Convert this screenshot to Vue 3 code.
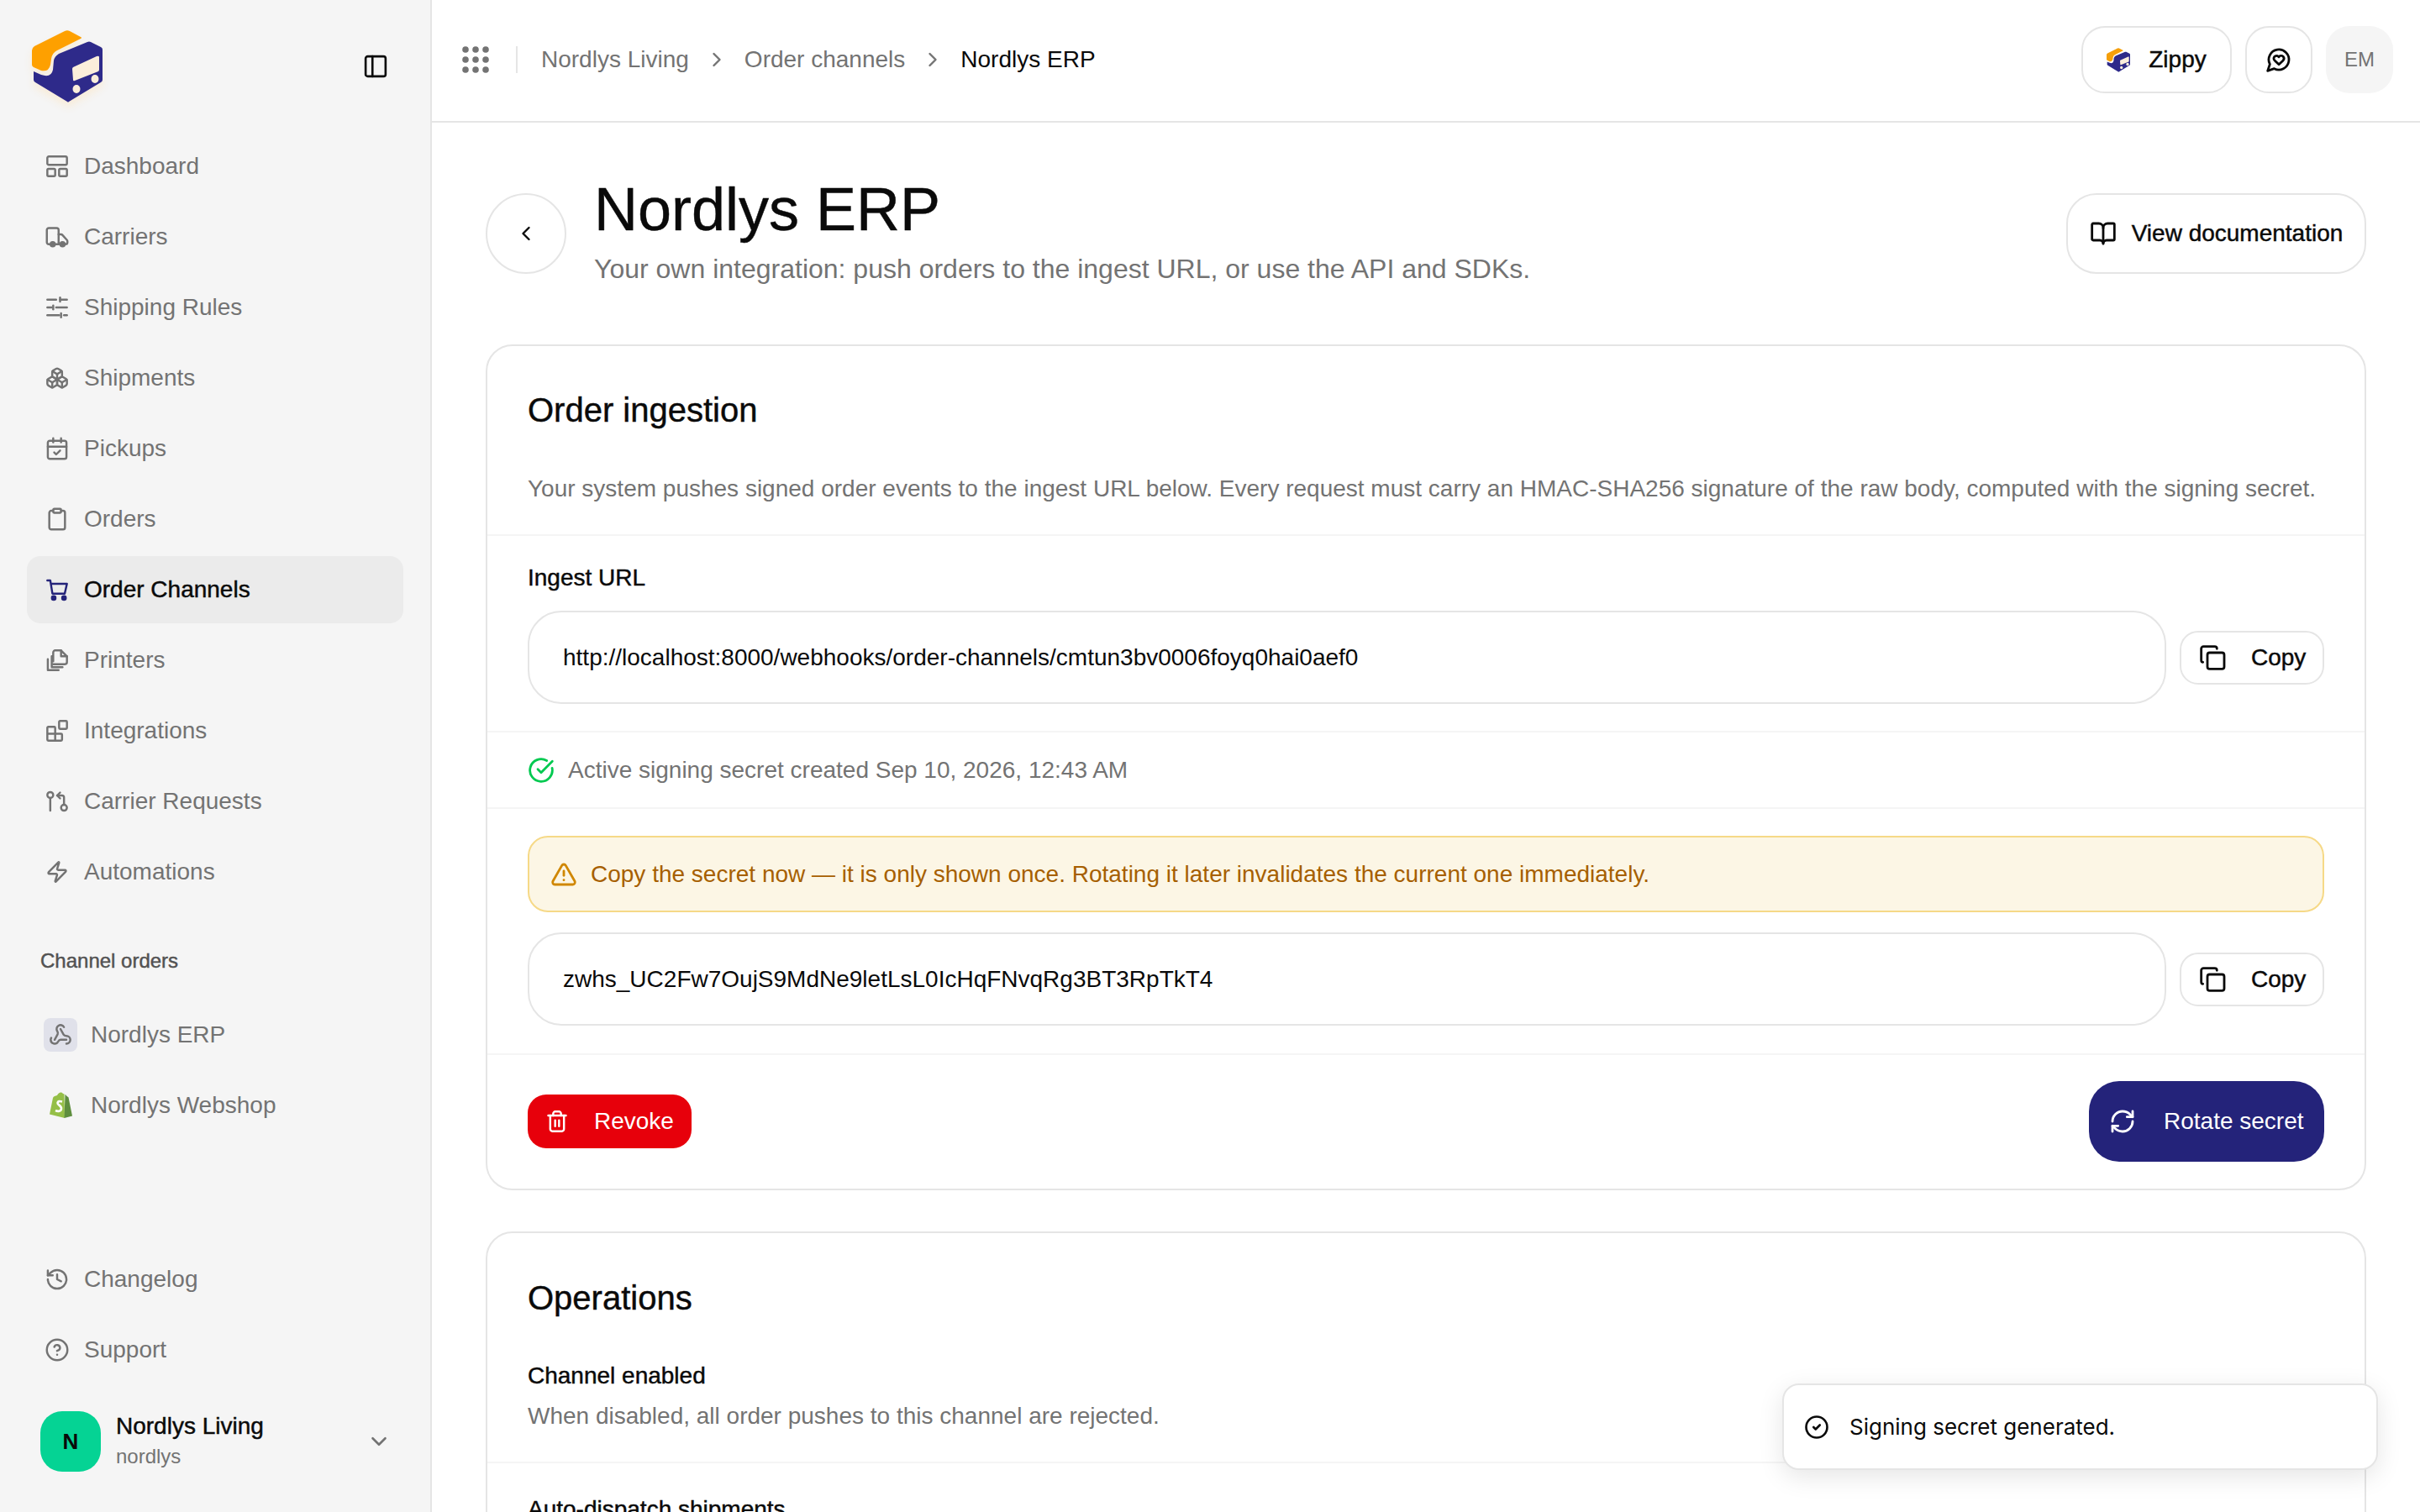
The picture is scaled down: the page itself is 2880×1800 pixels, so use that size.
<template>
  <div class="app">
    <!-- sidebar -->
    <aside class="sidebar">
      <div class="brand">
        <svg class="logo logo-big" viewBox="38 37 84 86">
          <path d="M38 61q0-3 3-5l36-18q3-1.500 6 0l13 7q2 1 0 2l-28 14q-6 3-7 10l-1 7q-2 9-11 7l-9-4q-2-1-2-3z" fill="#fea000" />
          <path d="M104 51q2-1 4 0l12 6q2 1 2 3v36q0 2-2 3l-38 23q-1 1-2 0l-38-23q-2-1-2-3V86l9 4q12 4 14-6l1-11q1-5 6-8z" fill="#2e2a8a" />
          <path d="M86 83q0-1 1-2l28-13q3-1 3 1v15q0 1-1 2l-28 11q-2 1-2-1z" fill="#fbeedb" />
          <ellipse cx="91" cy="107" rx="4.500" ry="5" fill="#fbeedb" />
          <ellipse cx="113" cy="95" rx="4.500" ry="5" fill="#fbeedb" />
        </svg>
        <svg class="ico toggle" viewBox="0 0 24 24" v-html="icons.panel"></svg>
      </div>

      <nav class="nav">
        <a v-for="item in navItems" :key="item.label" class="nav-item" :class="{ active: item.active }">
          <svg class="ico" viewBox="0 0 24 24" v-html="icons[item.icon]"></svg>
          <span>{{ item.label }}</span>
        </a>
      </nav>

      <div class="section-label medium">Channel orders</div>
      <nav class="nav">
        <a class="nav-item channel">
          <span class="channel-ico">
            <svg class="ico" viewBox="0 0 24 24" v-html="icons.webhook"></svg>
          </span>
          <span>Nordlys ERP</span>
        </a>
        <a class="nav-item channel">
          <span class="channel-ico plain">
            <svg class="shopify" viewBox="0 0 28 32">
              <path d="M1 26.500 5 7q.5-1.500 2-2l3-1q2-4 5-3.500 1 .2 2 1.500l1.500.5L19 31z" fill="#95bf47" />
              <path d="M19.500 3q1 0 1.500 1.500l2 1.500q.5.200.6.800L28 28.500 18.500 31z" fill="#5e8e3e" />
              <path d="M16 11.500q-5-1.500-5.500 1.500c-.3 2.500 5 3 4.500 7-.4 3-4 3.500-7 2" fill="none" stroke="#fff" stroke-width="2.600" />
            </svg>
          </span>
          <span>Nordlys Webshop</span>
        </a>
      </nav>

      <div class="sidebar-bottom">
        <nav class="nav">
          <a class="nav-item">
            <svg class="ico" viewBox="0 0 24 24" v-html="icons.history"></svg>
            <span>Changelog</span>
          </a>
          <a class="nav-item">
            <svg class="ico" viewBox="0 0 24 24" v-html="icons.help"></svg>
            <span>Support</span>
          </a>
        </nav>
        <div class="account">
          <div class="avatar">N</div>
          <div class="account-text">
            <div class="account-name medium">Nordlys Living</div>
            <div class="account-slug">nordlys</div>
          </div>
          <svg class="ico account-chevron" viewBox="0 0 24 24"><path d="m6 9 6 6 6-6" /></svg>
        </div>
      </div>
    </aside>

    <!-- main column -->
    <div class="main">
      <header class="topbar">
        <svg class="dots" viewBox="0 0 32 32">
          <template v-for="y in [4, 16, 28]" :key="y">
            <circle v-for="x in [4, 16, 28]" :key="x" :cx="x" :cy="y" r="3.800" />
          </template>
        </svg>
        <span class="top-divider"></span>
        <span class="crumb">Nordlys Living</span>
        <svg class="ico crumb-sep" viewBox="0 0 24 24"><path d="m9 6 6 6-6 6" /></svg>
        <span class="crumb crumb-b">Order channels</span>
        <svg class="ico crumb-sep" viewBox="0 0 24 24"><path d="m9 6 6 6-6 6" /></svg>
        <span class="crumb current">Nordlys ERP</span>

        <div class="top-actions">
          <button class="top-btn zippy">
            <svg class="logo logo-small" viewBox="38 37 84 86">
              <path d="M38 61q0-3 3-5l36-18q3-1.500 6 0l13 7q2 1 0 2l-28 14q-6 3-7 10l-1 7q-2 9-11 7l-9-4q-2-1-2-3z" fill="#f59f0a" />
              <path d="M104 51q2-1 4 0l12 6q2 1 2 3v36q0 2-2 3l-38 23q-1 1-2 0l-38-23q-2-1-2-3V86l9 4q12 4 14-6l1-11q1-5 6-8z" fill="#2e2a8a" />
              <path d="M86 83q0-1 1-2l28-13q3-1 3 1v15q0 1-1 2l-28 11q-2 1-2-1z" fill="#fbeedb" />
              <ellipse cx="91" cy="107" rx="5" ry="5.500" fill="#fbeedb" />
              <ellipse cx="113" cy="95" rx="5" ry="5.500" fill="#fbeedb" />
            </svg>
            <span class="medium">Zippy</span>
          </button>
          <button class="top-btn chat">
            <svg class="ico chat-ico" viewBox="0 0 24 24" v-html="icons.heart"></svg>
          </button>
          <div class="me">EM</div>
        </div>
      </header>

      <main class="content">
        <div class="title-row">
          <button class="back">
            <svg class="ico" viewBox="0 0 24 24"><path d="m15 6-6 6 6 6" /></svg>
          </button>
          <div class="title-text">
            <h1 class="medium">Nordlys ERP</h1>
            <p>Your own integration: push orders to the ingest URL, or use the API and SDKs.</p>
          </div>
          <button class="docs">
            <svg class="ico" viewBox="0 0 24 24" v-html="icons.book"></svg>
            <span class="medium">View documentation</span>
          </button>
        </div>

        <section class="card">
          <div class="card-head">
            <h2 class="medium">Order ingestion</h2>
            <p class="desc">Your system pushes signed order events to the ingest URL below. Every request must carry an HMAC-SHA256 signature of the raw body, computed with the signing secret.</p>
          </div>

          <div class="block url-block">
            <label class="field-label medium">Ingest URL</label>
            <div class="field-row">
              <div class="field">http://localhost:8000/webhooks/order-channels/cmtun3bv0006foyq0hai0aef0</div>
              <button class="copy">
                <svg class="ico" viewBox="0 0 24 24" v-html="icons.copy"></svg>
                <span class="medium">Copy</span>
              </button>
            </div>
          </div>

          <div class="status">
            <svg class="ico green" viewBox="0 0 24 24" v-html="icons.checkBig"></svg>
            <span>Active signing secret created Sep 10, 2026, 12:43 AM</span>
          </div>

          <div class="block secret-block">
            <div class="warning">
              <svg class="ico amber" viewBox="0 0 24 24" v-html="icons.warn"></svg>
              <span>Copy the secret now — it is only shown once. Rotating it later invalidates the current one immediately.</span>
            </div>
            <div class="field-row">
              <div class="field">zwhs_UC2Fw7OujS9MdNe9letLsL0IcHqFNvqRg3BT3RpTkT4</div>
              <button class="copy">
                <svg class="ico" viewBox="0 0 24 24" v-html="icons.copy"></svg>
                <span class="medium">Copy</span>
              </button>
            </div>
          </div>

          <div class="card-foot">
            <button class="revoke">
              <svg class="ico" viewBox="0 0 24 24" v-html="icons.trash"></svg>
              <span>Revoke</span>
            </button>
            <button class="rotate">
              <svg class="ico" viewBox="0 0 24 24" v-html="icons.refresh"></svg>
              <span>Rotate secret</span>
            </button>
          </div>
        </section>

        <section class="card ops">
          <h2 class="medium">Operations</h2>
          <div class="op-name medium first">Channel enabled</div>
          <p class="desc op-desc">When disabled, all order pushes to this channel are rejected.</p>
          <div class="op-sep"></div>
          <div class="op-name medium next">Auto-dispatch shipments</div>
        </section>
      </main>
    </div>

    <!-- toast -->
    <div class="toast">
      <svg class="ico" viewBox="0 0 24 24" v-html="icons.checkCircle"></svg>
      <span>Signing secret generated.</span>
    </div>
  </div>
</template>

<script setup>
const p = (...ds) => ds.map((d) => `<path d="${d}"/>`).join('')

const icons = {
  panel: '<rect x="2.500" y="2.500" width="19" height="19" rx="2"/><path d="M9 2.500v19"/>',
  dashboard: '<rect x="2" y="2" width="20" height="8.500" rx="1.500"/><rect x="2" y="14.500" width="8" height="7.500" rx="1.200"/><rect x="14" y="14.500" width="8" height="7.500" rx="1.200"/>',
  truck: p('M6 19.500H3.500a2 2 0 0 1-2-2V5a2 2 0 0 1 2-2h8a2 2 0 0 1 2 2v14.500', 'M13.500 9.500h2.500a2 2 0 0 1 1.500.7l4.500 5a2 2 0 0 1 .5 1.300v1a2 2 0 0 1-2 2h-1', 'M9 19.500h5') +
    '<circle cx="7.500" cy="19.500" r="2.200" fill="currentColor"/><circle cx="17.500" cy="19.500" r="2.200" fill="currentColor"/>',
  sliders: p('M22 4h-7', 'M11 4H2', 'M15 2v4', 'M22 12H11', 'M6.500 12H2', 'M8 10v4', 'M22 20h-3', 'M14 20H2', 'M16 18v4'),
  boxes: p('M2.970 12.920A2 2 0 0 0 2 14.630v3.240a2 2 0 0 0 .97 1.710l3 1.800a2 2 0 0 0 2.060 0L12 19v-5.500l-5-3-4.030 2.420Z', 'm7 16.500-4.740-2.850', 'm7 16.500 5-3', 'M7 16.500v5.170', 'M12 13.500V19l3.970 2.380a2 2 0 0 0 2.060 0l3-1.800a2 2 0 0 0 .97-1.710v-3.240a2 2 0 0 0-.97-1.710L17 10.500l-5 3Z', 'm17 16.500-5-3', 'm17 16.500 4.740-2.850', 'M17 16.500v5.170', 'M7.970 4.420A2 2 0 0 0 7 6.130v4.370l5 3 5-3V6.130a2 2 0 0 0-.97-1.710l-3-1.800a2 2 0 0 0-2.060 0l-3 1.800Z', 'M12 8 7.260 5.150', 'm12 8 4.740-2.850', 'M12 13.500V8'),
  calendar: '<rect x="2.500" y="4" width="19" height="18.500" rx="2"/>' + p('M8 1.500v4', 'M16 1.500v4', 'M2.500 10h19', 'm9 16 2 2 4-4'),
  clipboard: '<rect x="8" y="1.500" width="8" height="4" rx="1"/>' + p('M16 3.500h2a2 2 0 0 1 2 2v15a2 2 0 0 1-2 2H6a2 2 0 0 1-2-2v-15a2 2 0 0 1 2-2h2'),
  cart: p('M2 2.500h3l2.200 13.500h12.500L22 6H5.800') + '<circle cx="8.500" cy="20.500" r="1.800" fill="currentColor"/><circle cx="19" cy="20.500" r="1.800" fill="currentColor"/>',
  printers: p('M8 13V4a2 2 0 0 1 2-2h6l6 6v6a2 2 0 0 1-2 2H8', 'M16 2v6h6', 'M7.500 8H6.500v11h11', 'M2.500 11v11h11'),
  blocks: '<rect x="14" y="2" width="8" height="8" rx="1"/>' + p('M10 22V9a1 1 0 0 0-1-1H3a1 1 0 0 0-1 1v12a1 1 0 0 0 1 1h13a1 1 0 0 0 1-1v-5a1 1 0 0 0-1-1H2'),
  pull: '<circle cx="5" cy="5.500" r="3"/><circle cx="19" cy="18.500" r="3"/>' + p('M5 8.500v13', 'm15 9-3-3 3-3', 'M12 6h5a2 2 0 0 1 2 2v7.500'),
  zap: p('M4 14a1 1 0 0 1-.78-1.630l9.900-10.200a.5.5 0 0 1 .86.460l-1.920 6.020A1 1 0 0 0 13 10h7a1 1 0 0 1 .78 1.630l-9.900 10.200a.5.5 0 0 1-.86-.460l1.920-6.020A1 1 0 0 0 11 14z'),
  webhook: p('M18 16.980h-5.990c-1.100 0-1.950.94-2.480 1.900A4 4 0 0 1 2 17c.01-.7.2-1.400.57-2', 'm6 17 3.130-5.780c.53-.97.1-2.180-.5-3.100a4 4 0 1 1 6.890-4.060', 'm12 6 3.130 5.730C15.660 12.700 16.900 13 18 13a4 4 0 0 1 0 8'),
  history: p('M2.500 12a9.500 9.500 0 1 0 9.500-9.500 10 10 0 0 0-6.900 2.900L2.500 8', 'M2.500 3v5h5', 'M12 7v5l4 2'),
  help: '<circle cx="12" cy="12" r="10.500"/>' + p('M9.090 9a3 3 0 0 1 5.830 1c0 2-3 3-3 3', 'M12 17h.01'),
  heart: p('M7.900 20A9 9 0 1 0 4 16.100L2 22Z', 'M15.800 9.200a2.500 2.500 0 0 0-3.500 0l-.3.4-.35-.3a2.420 2.420 0 1 0-3.200 3.600l3.600 3.500 3.600-3.500c1.200-1.200 1.100-2.700.2-3.700'),
  book: p('M12 7v14', 'M3 18a1 1 0 0 1-1-1V4a1 1 0 0 1 1-1h5a4 4 0 0 1 4 4 4 4 0 0 1 4-4h5a1 1 0 0 1 1 1v13a1 1 0 0 1-1 1h-6a3 3 0 0 0-3 3 3 3 0 0 0-3-3z'),
  copy: '<rect x="7.500" y="7.500" width="15" height="14.500" rx="2"/>' + p('M3.500 16c-1 0-1.500-.9-1.500-2V4c0-1.100.9-2 2-2h10c1.100 0 2 .9 2 2'),
  checkBig: p('M21.801 10A10 10 0 1 1 17 3.335', 'm9 11 3 3L22 4'),
  warn: p('m21.730 18-8-14a2 2 0 0 0-3.480 0l-8 14A2 2 0 0 0 4 21h16a2 2 0 0 0 1.730-3', 'M12 9v4', 'M12 17h.01'),
  trash: p('M3 6h18', 'M19 6v14c0 1-1 2-2 2H7c-1 0-2-1-2-2V6', 'M8 6V4c0-1 1-2 2-2h4c1 0 2 1 2 2v2', 'M10 11v6', 'M14 11v6'),
  refresh: p('M3 12a9 9 0 0 1 9-9 9.750 9.750 0 0 1 6.740 2.740L21 8', 'M21 3v5h-5', 'M21 12a9 9 0 0 1-9 9 9.750 9.750 0 0 1-6.740-2.740L3 16', 'M8 16H3v5'),
  checkCircle: '<circle cx="12" cy="12" r="10"/>' + p('m9 12 2 2 4-4')
}

const navItems = [
  { label: 'Dashboard', icon: 'dashboard' },
  { label: 'Carriers', icon: 'truck' },
  { label: 'Shipping Rules', icon: 'sliders' },
  { label: 'Shipments', icon: 'boxes' },
  { label: 'Pickups', icon: 'calendar' },
  { label: 'Orders', icon: 'clipboard' },
  { label: 'Order Channels', icon: 'cart', active: true },
  { label: 'Printers', icon: 'printers' },
  { label: 'Integrations', icon: 'blocks' },
  { label: 'Carrier Requests', icon: 'pull' },
  { label: 'Automations', icon: 'zap' }
]
</script>

<style scoped>
.app {
  display: flex;
  height: 100vh;
  overflow: hidden;
  position: relative;
  background: #fff;
  color: #0a0a0a;
  font-family: "Liberation Sans", Arial, sans-serif;
  font-size: 28px;
}
button {
  font: inherit;
  color: inherit;
  background: #fff;
  cursor: pointer;
}
h1, h2, p {
  margin: 0;
  font-weight: 400;
}
/* stands in for the medium weight that Liberation doesn't have */
.medium {
  -webkit-text-stroke: 0.45px currentColor;
}
.ico {
  width: 28px;
  height: 28px;
  flex: none;
  fill: none;
  stroke: currentColor;
  stroke-width: 2.100;
  stroke-linecap: round;
  stroke-linejoin: round;
}

/* sidebar ------------------------------------------------------------------ */
.sidebar {
  width: 514px;
  flex: none;
  box-sizing: border-box;
  display: flex;
  flex-direction: column;
  background: #f5f5f5;
  border-right: 2px solid #e5e5e5;
  color: #737373;
}
.brand {
  height: 158px;
  flex: none;
  display: flex;
  align-items: center;
  justify-content: space-between;
  padding: 0 50px 0 38px;
  box-sizing: border-box;
}
.logo-big {
  width: 84px;
  height: 86px;
  filter: drop-shadow(0 6px 5px #f8ecd9);
}
.toggle {
  color: #0a0a0a;
  width: 30px;
  height: 30px;
}
.nav {
  display: flex;
  flex-direction: column;
  gap: 4px;
  padding: 0 32px;
}
.nav-item {
  height: 80px;
  display: flex;
  align-items: center;
  gap: 18px;
  padding-left: 22px;
  border-radius: 16px;
  white-space: nowrap;
}
.nav-item.active {
  background: #ebebeb;
  color: #0a0a0a;
  -webkit-text-stroke: 0.45px currentColor;
}
.nav-item.active .ico {
  color: #24237a;
  -webkit-text-stroke: 0;
}
.section-label {
  margin: 50px 0 32px 48px;
  height: 32px;
  line-height: 32px;
  font-size: 24px;
  color: #525252;
}
.channel {
  padding-left: 20px;
  gap: 16px;
}
.channel-ico {
  width: 40px;
  height: 40px;
  flex: none;
  display: flex;
  align-items: center;
  justify-content: center;
  border-radius: 8px;
  background: #e0e1ea;
}
.channel-ico.plain {
  background: none;
}
.shopify {
  width: 28px;
  height: 32px;
}
.sidebar-bottom {
  margin-top: auto;
}
.account {
  display: flex;
  align-items: center;
  margin: 33px 0 48px 48px;
  padding-right: 46px;
}
.avatar {
  width: 72px;
  height: 72px;
  border-radius: 26px;
  background: #05d394;
  color: #0a0a0a;
  display: flex;
  align-items: center;
  justify-content: center;
  font-weight: 700;
  font-size: 26px;
}
.account-text {
  margin-left: 18px;
  flex: 1;
}
.account-name {
  color: #0a0a0a;
  line-height: 36px;
}
.account-slug {
  font-size: 24px;
  line-height: 36px;
}
.account-chevron {
  width: 30px;
  height: 30px;
}

/* top bar ------------------------------------------------------------------ */
.main {
  flex: 1;
  min-width: 0;
  display: flex;
  flex-direction: column;
}
.topbar {
  height: 146px;
  flex: none;
  box-sizing: border-box;
  display: flex;
  align-items: center;
  padding: 0 32px 2px 36px;
  border-bottom: 2px solid #e5e5e5;
}
.dots {
  width: 32px;
  height: 32px;
  fill: #737373;
}
.top-divider {
  width: 2px;
  height: 32px;
  background: #e5e5e5;
  margin: 0 28px 0 32px;
}
.crumb {
  color: #737373;
  white-space: nowrap;
}
.crumb.current {
  color: #0a0a0a;
}
.crumb-sep {
  width: 28px;
  height: 28px;
  margin: 0 19px;
  color: #737373;
}
.top-actions {
  margin-left: auto;
  display: flex;
  align-items: center;
  gap: 16px;
}
.top-btn {
  height: 80px;
  box-sizing: border-box;
  border: 2px solid #e5e5e5;
  border-radius: 28px;
  display: flex;
  align-items: center;
  justify-content: center;
  padding: 0;
}
.zippy {
  width: 179px;
  gap: 22px;
}
.logo-small {
  width: 28px;
  height: 29px;
}
.chat {
  width: 80px;
}
.chat-ico {
  width: 32px;
  height: 32px;
}
.me {
  width: 80px;
  height: 80px;
  border-radius: 28px;
  background: #f5f5f5;
  color: #737373;
  display: flex;
  align-items: center;
  justify-content: center;
  font-size: 24px;
}

/* page content ------------------------------------------------------------- */
.content {
  flex: 1;
  min-height: 0;
  overflow: hidden;
  padding: 63px 64px 0;
}
.title-row {
  display: flex;
  align-items: center;
  margin-bottom: 68px;
}
.back {
  width: 96px;
  height: 96px;
  margin-top: 4px;
  flex: none;
  border: 2px solid #e5e5e5;
  border-radius: 50%;
  display: flex;
  align-items: center;
  justify-content: center;
  padding: 0;
}
.title-text {
  margin-left: 33px;
  flex: 1;
}
.title-text h1 {
  font-size: 72px;
  line-height: 80px;
  margin-bottom: 9px;
}
.title-text p {
  font-size: 32px;
  line-height: 44px;
  color: #737373;
}
.docs {
  width: 357px;
  height: 96px;
  margin-top: 4px;
  flex: none;
  border: 2px solid #e5e5e5;
  border-radius: 36px;
  display: flex;
  align-items: center;
  justify-content: center;
  gap: 18px;
  padding: 0;
}
.docs .ico {
  width: 32px;
  height: 32px;
}
.card {
  border: 2px solid #e5e5e5;
  border-radius: 32px;
  background: #fff;
}
h2 {
  font-size: 40px;
  line-height: 48px;
}
.desc {
  line-height: 40px;
  color: #737373;
  white-space: nowrap;
}
.card-head {
  padding: 52px 48px 34px;
  border-bottom: 2px solid #f5f5f5;
}
.card-head .desc {
  margin-top: 50px;
}
.block {
  padding: 0 48px;
  border-bottom: 2px solid #f5f5f5;
}
.url-block {
  padding-top: 32px;
  padding-bottom: 32px;
}
.field-label {
  display: block;
  line-height: 36px;
  margin-bottom: 21px;
}
.field-row {
  display: flex;
  align-items: center;
  gap: 16px;
}
.field {
  flex: 1;
  height: 111px;
  box-sizing: border-box;
  border: 2px solid #e5e5e5;
  border-radius: 40px;
  padding: 0 40px;
  display: flex;
  align-items: center;
  white-space: nowrap;
}
.copy {
  width: 172px;
  height: 64px;
  flex: none;
  box-sizing: border-box;
  border: 2px solid #e5e5e5;
  border-radius: 22px;
  display: flex;
  align-items: center;
  gap: 30px;
  padding: 0 0 0 21px;
}
.copy .ico {
  width: 32px;
  height: 32px;
}
.status {
  height: 89px;
  display: flex;
  align-items: center;
  gap: 16px;
  padding: 0 48px;
  color: #737373;
  border-bottom: 2px solid #f5f5f5;
}
.status .ico {
  width: 32px;
  height: 32px;
}
.green {
  color: #00c950;
}
.secret-block {
  padding-top: 32px;
  padding-bottom: 33px;
}
.warning {
  height: 91px;
  box-sizing: border-box;
  margin-bottom: 24px;
  background: #fcf6e5;
  border: 2px solid #f6d987;
  border-radius: 24px;
  display: flex;
  align-items: center;
  gap: 16px;
  padding: 0 25px;
  color: #a65f00;
}
.amber {
  width: 32px;
  height: 32px;
  color: #d08700;
}
.card-foot {
  display: flex;
  align-items: center;
  justify-content: space-between;
  padding: 31px 48px 32px;
}
.revoke {
  width: 195px;
  height: 64px;
  border: none;
  border-radius: 22px;
  background: #e7000b;
  color: #fff;
  display: flex;
  align-items: center;
  gap: 30px;
  padding: 0 0 0 21px;
}
.rotate {
  width: 280px;
  height: 96px;
  border: none;
  border-radius: 36px;
  background: #24237a;
  color: #fff;
  display: flex;
  align-items: center;
  gap: 33px;
  padding: 0 0 0 24px;
}
.rotate .ico {
  width: 32px;
  height: 32px;
}
.ops {
  margin-top: 49px;
  padding: 53px 48px 0;
  height: 600px;
}
.op-name {
  line-height: 36px;
}
.op-name.first {
  margin-top: 51px;
}
.op-desc {
  margin-top: 10px;
}
.op-sep {
  height: 2px;
  background: #f5f5f5;
  margin: 34px -48px 37px;
}

/* toast (over the page) ---------------------------------------------------- */
.toast {
  position: absolute;
  right: 50px;
  bottom: 50px;
  width: 709px;
  height: 103px;
  box-sizing: border-box;
  background: #fff;
  border: 2px solid #e5e5e5;
  border-radius: 20px;
  box-shadow: 0 8px 30px rgba(0, 0, 0, 0.1);
  display: flex;
  align-items: center;
  gap: 24px;
  padding: 0 24px;
  font-family: Inter, sans-serif;
  font-size: 26px;
}
.toast .ico {
  width: 30px;
  height: 30px;
}
</style>
